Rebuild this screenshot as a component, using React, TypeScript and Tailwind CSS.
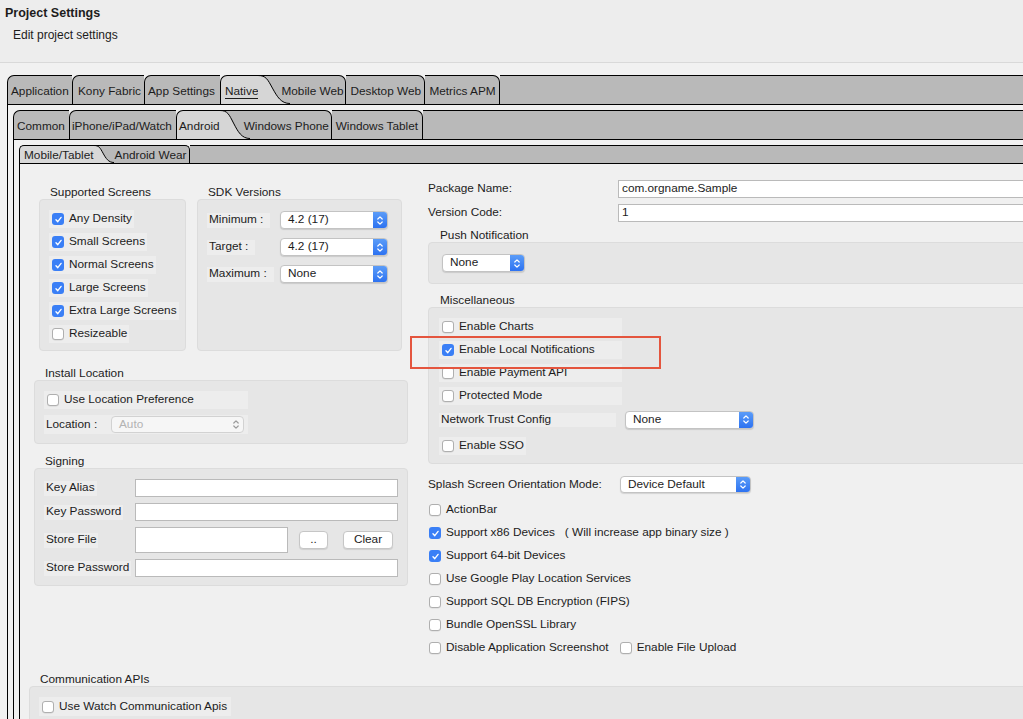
import React from "react";

const TL = "flex items-center pt-[4px] shrink-0 whitespace-nowrap bg-[#b9b9b9] border-t border-l border-black rounded-tl-[7px]";
const TR = "flex items-center pt-[4px] shrink-0 whitespace-nowrap bg-[#b9b9b9] border-t border-r border-black rounded-tr-[7px]";
const TSEL = "flex items-center pt-[4px] shrink-0 whitespace-nowrap bg-[#d6d6d6] border-t border-l border-black rounded-tl-[7px]";
const TR3 = "flex items-center pt-[2px] shrink-0 whitespace-nowrap bg-[#b9b9b9] border-t border-r border-black rounded-tr-[5px]";
const TSEL3 = "flex items-center pt-[2px] shrink-0 whitespace-nowrap bg-[#d8d8d8] border-t border-l border-black rounded-tl-[5px]";
const BOX = "bg-[#e6e6e6] border border-[#dcdcdc] rounded-[4px]";
const HL = "bg-[#ededed]";
const INPUT = "bg-white border border-[#bababa] flex items-center pl-[3px]";
const BTN = "bg-white border border-[#c6c6c6] rounded-[4px] shadow-[0_1px_1px_rgba(0,0,0,0.1)] flex items-center justify-center";

function Curve({ w, h, sel }: { w: number; h: number; sel: string }) {
  const b = h - 0.5;
  const d = `M0,0.5 C${w * 0.25},0.5 ${w * 0.3},${h * 0.15} ${w * 0.45},${h * 0.45} S${w * 0.72},${b} ${w},${b}`;
  return (
    <svg width={w} height={h} viewBox={`0 0 ${w} ${h}`} className="block shrink-0">
      <rect x="0" y="0" width={w} height={h} fill="#b9b9b9" />
      <path d={`${d} L${w},${h} L0,${h} Z`} fill={sel} />
      <path d={d} stroke="#000" strokeWidth="1" fill="none" />
      <path d={`M0,0.5 L${w},0.5`} stroke="#000" strokeWidth="1" />
    </svg>
  );
}

function Chevrons({ color }: { color: string }) {
  return (
    <svg width="8" height="11" viewBox="0 0 8 11" fill="none">
      <path d="M1.8 4 L4 1.8 L6.2 4" stroke={color} strokeWidth="1.2" strokeLinecap="round" strokeLinejoin="round" />
      <path d="M1.8 7 L4 9.2 L6.2 7" stroke={color} strokeWidth="1.2" strokeLinecap="round" strokeLinejoin="round" />
    </svg>
  );
}

function Select({ value, className, disabled }: { value: string; className: string; disabled?: boolean }) {
  if (disabled) {
    return (
      <div className={`flex items-stretch rounded-[4px] border border-[#d2d2d2] bg-[#f6f6f6] ${className}`}>
        <span className="flex-1 flex items-center pl-[7px] text-[#b3b3b3]">{value}</span>
        <span className="w-[15px] flex items-center justify-center">
          <Chevrons color="#9a9a9a" />
        </span>
      </div>
    );
  }
  return (
    <div
      className={`flex items-stretch rounded-[4px] border border-[#c3c3c3] bg-white shadow-[0_1px_1px_rgba(0,0,0,0.12)] overflow-hidden ${className}`}
    >
      <span className="flex-1 flex items-center pl-[7px] whitespace-nowrap">{value}</span>
      <span className="w-[14px] bg-linear-to-b from-[#5b9cf8] to-[#2d72f1] flex items-center justify-center">
        <Chevrons color="#ffffff" />
      </span>
    </div>
  );
}

function Check({ checked }: { checked?: boolean }) {
  if (checked) {
    return (
      <span className="w-[12px] h-[12px] rounded-[3px] bg-[#3a7ff6] flex items-center justify-center shrink-0">
        <svg width="9" height="9" viewBox="0 0 10 10">
          <path d="M2.2 5.3 L4.2 7.4 L7.9 2.6" stroke="white" strokeWidth="1.5" fill="none" strokeLinecap="round" strokeLinejoin="round" />
        </svg>
      </span>
    );
  }
  return <span className="block w-[12px] h-[12px] rounded-[3px] bg-white border border-[#afafaf] shadow-[0_0.5px_0.5px_rgba(0,0,0,0.1)] shrink-0" />;
}

function CheckRow({ label, checked, className = "" }: { label: string; checked?: boolean; className?: string }) {
  return (
    <div className={`flex items-center h-[18px] pl-[3px] pr-[2px] gap-[5px] whitespace-nowrap ${HL} ${className}`}>
      <Check checked={checked} />
      <span>{label}</span>
    </div>
  );
}

function PlainCheck({ label, checked, children }: { label: string; checked?: boolean; children?: React.ReactNode }) {
  return (
    <div className="flex items-center h-[18px] pl-[1px] gap-[5px] whitespace-nowrap">
      <Check checked={checked} />
      <span>{label}</span>
      {children}
    </div>
  );
}

function Label({ children, pl = "pl-[11px]" }: { children: React.ReactNode; pl?: string }) {
  return <div className={`h-[14px] leading-[14px] whitespace-nowrap ${pl}`}>{children}</div>;
}

function SigningRow({ label, children, h = "h-[18px]" }: { label: string; children: React.ReactNode; h?: string }) {
  return (
    <div className={`flex items-center ${h}`}>
      <div className="w-[91px] shrink-0">
        <span className={`inline-flex items-center h-[15px] px-[2px] ${HL}`}>{label}</span>
      </div>
      {children}
    </div>
  );
}

function SdkRow({ label, value }: { label: string; value: string }) {
  return (
    <div className="flex items-center h-[18px]">
      <div className="w-[73px] shrink-0">
        <span className={`inline-flex items-center h-[15px] pl-[2px] pr-[7px] ${HL}`}>{label}</span>
      </div>
      <Select value={value} className="w-[108px] h-[18px]" />
    </div>
  );
}

function Content() {
  return (
    <div className="border-l border-black bg-[#f0f0f0] pb-[40px]">
      <div className="flex pl-[14px]">
        {/* Left column */}
        <div className="w-[374px] shrink-0 pt-[21px] flex flex-col">
          <div className="flex gap-[11px] px-[5px]">
            <div className="w-[147px] flex flex-col shrink-0">
              <Label>Supported Screens</Label>
              <div className={`${BOX} h-[152px] pt-[10px] pl-[9px] flex flex-col items-start gap-[5px]`}>
                <CheckRow label="Any Density" checked />
                <CheckRow label="Small Screens" checked />
                <CheckRow label="Normal Screens" checked />
                <CheckRow label="Large Screens" checked />
                <CheckRow label="Extra Large Screens" checked />
                <CheckRow label="Resizeable" />
              </div>
            </div>
            <div className="w-[205px] flex flex-col shrink-0">
              <Label>SDK Versions</Label>
              <div className={`${BOX} h-[152px] pt-[11px] pl-[9px] flex flex-col gap-[9px]`}>
                <SdkRow label="Minimum :" value="4.2 (17)" />
                <SdkRow label="Target :" value="4.2 (17)" />
                <SdkRow label="Maximum :" value="None" />
              </div>
            </div>
          </div>

          <div className="mt-[15px]">
            <Label>Install Location</Label>
            <div className={`${BOX} h-[64px] pt-[10px] pl-[9px] flex flex-col`}>
              <CheckRow label="Use Location Preference" className="w-[204px]" />
              <div className={`flex items-center h-[19px] w-[204px] mt-[6px] ${HL}`}>
                <span className="w-[67px] pl-[2px] shrink-0">Location :</span>
                <Select value="Auto" className="w-[133px] h-[17px]" disabled />
              </div>
            </div>
          </div>

          <div className="mt-[10px]">
            <Label>Signing</Label>
            <div className={`${BOX} h-[118px] pt-[10px] pl-[9px] flex flex-col gap-[6px]`}>
              <SigningRow label="Key Alias">
                <div className={`${INPUT} w-[263px] h-[18px]`} />
              </SigningRow>
              <SigningRow label="Key Password">
                <div className={`${INPUT} w-[263px] h-[18px]`} />
              </SigningRow>
              <SigningRow label="Store File" h="h-[26px]">
                <div className={`${INPUT} w-[153px] h-[26px]`} />
                <div className={`${BTN} ml-[11px] w-[29px] h-[18px]`}>..</div>
                <div className={`${BTN} ml-[15px] w-[50px] h-[18px]`}>Clear</div>
              </SigningRow>
              <SigningRow label="Store Password">
                <div className={`${INPUT} w-[263px] h-[18px]`} />
              </SigningRow>
            </div>
          </div>
        </div>

        {/* Right column */}
        <div className="flex-1 ml-[20px] pt-[16px] flex flex-col">
          <div className="flex items-center h-[18px]">
            <span className="w-[190px] shrink-0">Package Name:</span>
            <div className={`${INPUT} flex-1 h-[18px]`}>com.orgname.Sample</div>
          </div>
          <div className="flex items-center h-[18px] mt-[6px]">
            <span className="w-[190px] shrink-0">Version Code:</span>
            <div className={`${INPUT} flex-1 h-[18px]`}>1</div>
          </div>

          <div className="mt-[6px]">
            <Label pl="pl-[12px]">Push Notification</Label>
            <div className={`${BOX} h-[42px] pt-[11px] pl-[13px]`}>
              <Select value="None" className="w-[83px] h-[18px]" />
            </div>
          </div>

          <div className="mt-[9px]">
            <Label pl="pl-[12px]">Miscellaneous</Label>
            <div className={`${BOX} h-[157px] pt-[10px] pl-[10px] flex flex-col items-start`}>
              <CheckRow label="Enable Charts" className="w-[183px]" />
              <CheckRow label="Enable Local Notifications" checked className="w-[183px] mt-[5px]" />
              <CheckRow label="Enable Payment API" className="w-[183px] mt-[5px]" />
              <CheckRow label="Protected Mode" className="w-[183px] mt-[5px]" />
              <div className="flex items-center h-[19px] mt-[5px]">
                <span className={`w-[177px] h-[14px] pl-[2px] flex items-center shrink-0 ${HL}`}>Network Trust Config</span>
                <Select value="None" className="w-[129px] h-[18px] ml-[9px]" />
              </div>
              <CheckRow label="Enable SSO" className="mt-[8px]" />
            </div>
          </div>

          <div className="flex items-center h-[17px] mt-[12px]">
            <span className="w-[192px] shrink-0 whitespace-nowrap">Splash Screen Orientation Mode:</span>
            <Select value="Device Default" className="w-[131px] h-[17px]" />
          </div>

          <div className="mt-[8px] flex flex-col gap-[5px]">
            <PlainCheck label="ActionBar" />
            <PlainCheck label="Support x86 Devices" checked>
              <span className="ml-[5px]">( Will increase app binary size )</span>
            </PlainCheck>
            <PlainCheck label="Support 64-bit Devices" checked />
            <PlainCheck label="Use Google Play Location Services" />
            <PlainCheck label="Support SQL DB Encryption (FIPS)" />
            <PlainCheck label="Bundle OpenSSL Library" />
            <div className="flex items-center h-[18px] pl-[1px] whitespace-nowrap">
              <Check />
              <span className="ml-[5px]">Disable Application Screenshot</span>
              <span className="ml-[11px] flex">
                <Check />
              </span>
              <span className="ml-[5px]">Enable File Upload</span>
            </div>
          </div>
        </div>
      </div>

      <div className="mt-[15px] pl-[9px]">
        <Label>Communication APIs</Label>
        <div className={`${BOX} h-[60px] pt-[10px] pl-[9px] flex items-start`}>
          <CheckRow label="Use Watch Communication Apis" className="h-[19px] pr-[4px]" />
        </div>
      </div>
    </div>
  );
}

export default function App() {
  return (
    <div className="relative w-[1023px] h-[719px] overflow-hidden bg-[#f1f1f1] text-[11.8px] text-[#1c1c1c] font-['Liberation_Sans',Arial,sans-serif]">
      {/* Header */}
      <div className="h-[63px] bg-[#ededed] border-b border-[#d9d9d9] pt-[5px]">
        <div className="pl-[5px] text-[12.5px] font-bold leading-[16px]">Project Settings</div>
        <div className="pl-[13px] text-[12px] leading-[16px] mt-[6px]">Edit project settings</div>
      </div>

      {/* Level 1 */}
      <div className="w-[1060px] ml-[7px] mt-[12px]">
        <div className="flex h-[30px] border-b border-black">
          <div className={`${TL} w-[65px] pl-[3px]`}>Application</div>
          <div className={`${TL} w-[72px] pl-[5px]`}>Kony Fabric</div>
          <div className={`${TL} w-[76px] pl-[3px]`}>App Settings</div>
          <div className="flex shrink-0">
            <div className={`${TSEL} pl-[4px]`}>
              <span className="underline underline-offset-[3px]">Native</span>
            </div>
            <Curve w={32} h={29} sel="#d6d6d6" />
          </div>
          <div className={`${TR} w-[56px]`}>
            <span className="-ml-[9px]">Mobile Web</span>
          </div>
          <div className={`${TR} w-[79px] pl-[4px]`}>Desktop Web</div>
          <div className={`${TR} w-[75px] pl-[4px]`}>Metrics APM</div>
          <div className="flex-1 bg-[#b9b9b9] border-t border-black" />
        </div>

        <div className="border-l border-black pl-[5px] pt-[5px]">
          {/* Level 2 */}
          <div className="flex h-[30px] border-b border-black">
            <div className={`${TL} w-[56px] pl-[3px]`}>Common</div>
            <div className={`${TL} w-[107px] pl-[2px]`}>iPhone/iPad/Watch</div>
            <div className="flex shrink-0">
              <div className={`${TSEL} pl-[2px]`}>Android</div>
              <Curve w={30} h={29} sel="#d6d6d6" />
            </div>
            <div className={`${TR} w-[82px]`}>
              <span className="-ml-[6px]">Windows Phone</span>
            </div>
            <div className={`${TR} w-[91px] pl-[4px]`}>Windows Tablet</div>
            <div className="flex-1 bg-[#b9b9b9] border-t border-black" />
          </div>

          <div className="border-l border-black pl-[5px] pt-[5px]">
            {/* Level 3 */}
            <div className="flex h-[19px] border-b border-black">
              <div className="flex shrink-0">
                <div className={`${TSEL3} pl-[4px]`}>Mobile/Tablet</div>
                <Curve w={20} h={18} sel="#d8d8d8" />
              </div>
              <div className={`${TR3} w-[76px] pl-[1px]`}>Android Wear</div>
              <div className="flex-1 bg-[#b9b9b9] border-t border-black" />
            </div>
            <Content />
          </div>
        </div>
      </div>

      {/* Annotation highlight */}
      <div className="absolute left-[410px] top-[336px] w-[251px] h-[33px] border-2 border-[#e4553e] pointer-events-none" />
    </div>
  );
}
